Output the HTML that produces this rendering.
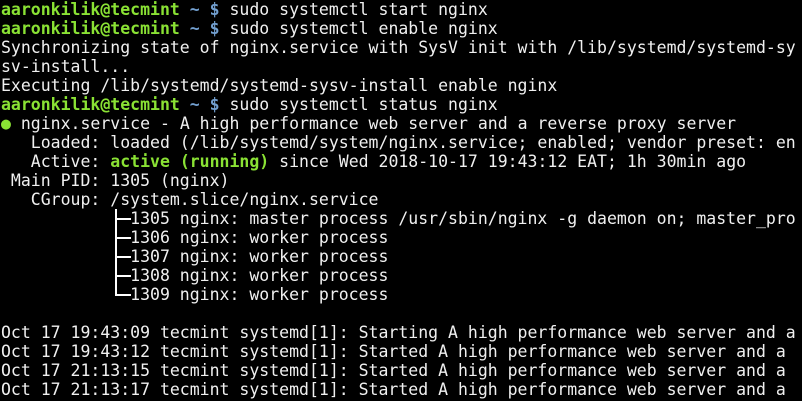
<!DOCTYPE html>
<html><head><meta charset="utf-8"><style>
html,body{margin:0;padding:0;background:#000;width:802px;height:401px;overflow:hidden;position:relative}
pre{margin:0;padding:0 0 0 1px;font-family:"DejaVu Sans Mono","Liberation Mono",monospace;font-size:16.5px;line-height:19px;color:#f0f0f0;white-space:pre}
.g{color:#8ae234;font-weight:bold}
.b{color:#729fcf;font-weight:bold}
.d{color:#8ae234}
.v{position:absolute;left:115px;top:209px;width:2px;height:87px;background:#fff}
.h{position:absolute;left:115px;width:16px;height:2px;background:#fff}
</style></head><body><pre><span class="g">aaronkilik@tecmint</span> <span class="b">~ $</span> sudo systemctl start nginx
<span class="g">aaronkilik@tecmint</span> <span class="b">~ $</span> sudo systemctl enable nginx
Synchronizing state of nginx.service with SysV init with /lib/systemd/systemd-sy
sv-install...
Executing /lib/systemd/systemd-sysv-install enable nginx
<span class="g">aaronkilik@tecmint</span> <span class="b">~ $</span> sudo systemctl status nginx
<span class="d">●</span> nginx.service - A high performance web server and a reverse proxy server
   Loaded: loaded (/lib/systemd/system/nginx.service; enabled; vendor preset: en
   Active: <span class="g">active (running)</span> since Wed 2018-10-17 19:43:12 EAT; 1h 30min ago
 Main PID: 1305 (nginx)
   CGroup: /system.slice/nginx.service
             1305 nginx: master process /usr/sbin/nginx -g daemon on; master_pro
             1306 nginx: worker process
             1307 nginx: worker process
             1308 nginx: worker process
             1309 nginx: worker process

Oct 17 19:43:09 tecmint systemd[1]: Starting A high performance web server and a
Oct 17 19:43:12 tecmint systemd[1]: Started A high performance web server and a
Oct 17 21:13:15 tecmint systemd[1]: Started A high performance web server and a
Oct 17 21:13:17 tecmint systemd[1]: Started A high performance web server and a
</pre>
<div class="v"></div>
<div class="h" style="top:218px"></div>
<div class="h" style="top:237px"></div>
<div class="h" style="top:256px"></div>
<div class="h" style="top:275px"></div>
<div class="h" style="top:294px"></div>
</body></html>
